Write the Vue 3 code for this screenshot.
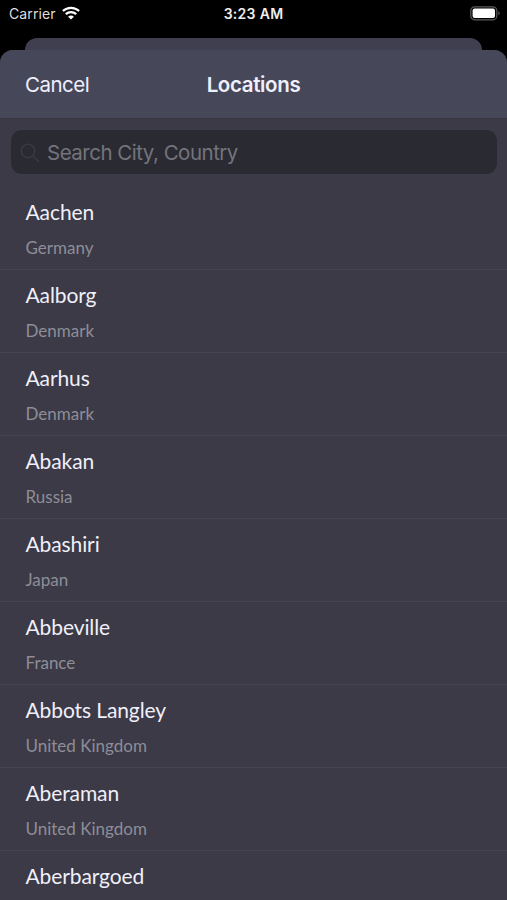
<script setup>
const locations = [
  { city: 'Aachen', country: 'Germany' },
  { city: 'Aalborg', country: 'Denmark' },
  { city: 'Aarhus', country: 'Denmark' },
  { city: 'Abakan', country: 'Russia' },
  { city: 'Abashiri', country: 'Japan' },
  { city: 'Abbeville', country: 'France' },
  { city: 'Abbots Langley', country: 'United Kingdom' },
  { city: 'Aberaman', country: 'United Kingdom' },
  { city: 'Aberbargoed', country: '' },
]
</script>

<template>
  <div class="screen">
    <div class="status">
      <div class="carrier">
        <span>Carrier</span>
        <svg class="wifi" width="18" height="14" viewBox="0 0 18 14">
          <path d="M.9 5C5.5.7 12.5.7 17.1 5" />
          <path d="M3.8 8.1c3-2.7 7.4-2.7 10.4 0" />
          <path class="dot" d="M9 13.6 6.1 10.7c1.7-1.5 4.1-1.5 5.8 0z" />
        </svg>
      </div>
      <span class="time">3:23 AM</span>
      <svg class="battery" width="31" height="15" viewBox="0 0 31 15">
        <rect x=".8" y=".8" width="26" height="13" rx="3.8" fill="none" stroke="#5c5c5c" stroke-width="1.2" />
        <rect x="2.6" y="2.6" width="22.4" height="9.4" rx="2" fill="#fff" />
        <path d="M28.4 5.1c1.8.7 1.8 3.7 0 4.4z" fill="#5c5c5c" />
      </svg>
    </div>
    <div class="back-card"></div>
    <main class="sheet">
      <header class="nav">
        <span class="cancel">Cancel</span>
        <h1>Locations</h1>
        <span></span>
      </header>
      <div class="search">
        <svg width="20" height="20" viewBox="0 0 20 20">
          <circle cx="8" cy="8" r="6.8" />
          <path d="m13 13 5.5 5.5" />
        </svg>
        <span>Search City, Country</span>
      </div>
      <ul>
        <li v-for="item in locations" :key="item.city">
          <div class="city">{{ item.city }}</div>
          <div class="country">{{ item.country }}</div>
        </li>
      </ul>
    </main>
  </div>
</template>

<style>
body {
  margin: 0;
  background: #000;
}
</style>

<style scoped>
.screen {
  display: flex;
  flex-direction: column;
  width: 507px;
  height: 900px;
  overflow: hidden;
  background: #000;
  font-family: Inter, sans-serif;
  white-space: nowrap;
}
.status {
  display: grid;
  grid-template-columns: 1fr auto 1fr;
  flex: none;
  box-sizing: border-box;
  height: 38px;
  padding: 6px 6px 0 9px;
  font-size: 14px;
  line-height: 16px;
  color: #dedede;
}
.carrier {
  display: flex;
  gap: 6px;
  letter-spacing: 0.1px;
}
.wifi {
  fill: none;
  stroke: #fff;
  stroke-width: 2.3;
}
.wifi .dot {
  fill: #fff;
  stroke: none;
}
.time {
  margin-right: 3px;
  font-weight: 600;
  letter-spacing: 0.3px;
  color: #ededed;
}
.battery {
  justify-self: end;
}
.back-card {
  flex: none;
  height: 12px;
  margin: 0 25px;
  border-radius: 12px 12px 0 0;
  background: #403f50;
}
.sheet {
  flex: 1;
  min-height: 0;
  overflow: hidden;
  border-radius: 13px 13px 0 0;
  background: #3b3a46;
}
.nav {
  display: grid;
  grid-template-columns: 1fr auto 1fr;
  align-items: center;
  box-sizing: border-box;
  height: 69px;
  padding: 0 25px;
  border-bottom: 1px solid #373643;
  background: #47475a;
  color: #f0effc;
}
.cancel {
  font-size: 20.5px;
  letter-spacing: -0.5px;
}
h1 {
  margin: 0;
  font-size: 20.5px;
  font-weight: 600;
  letter-spacing: -0.35px;
}
.search {
  display: flex;
  align-items: center;
  gap: 7px;
  box-sizing: border-box;
  height: 44px;
  margin: 11px 10px 12px 11px;
  padding: 1px 0 0 9px;
  border-radius: 11px;
  background: #2a2a33;
  color: #74747b;
  font-size: 20.5px;
  letter-spacing: -0.5px;
}
.search svg {
  fill: none;
  stroke: #393943;
  stroke-width: 1.6;
  stroke-linecap: round;
}
ul {
  margin: 0;
  padding: 0;
  list-style: none;
  font-family: Lato, sans-serif;
}
li {
  box-sizing: border-box;
  height: 83.08px;
  padding: 11.6px 25.5px 0;
  border-bottom: 1px solid #444350;
}
li:first-child {
  height: 83.6px;
}
li:not(:first-child) {
  padding-top: 11.1px;
}
.city {
  font-size: 21px;
  line-height: 28px;
  letter-spacing: -0.1px;
  color: #f0effa;
}
.country {
  margin-top: 11px;
  font-size: 17px;
  line-height: 22px;
  color: #8e8d98;
}
</style>
